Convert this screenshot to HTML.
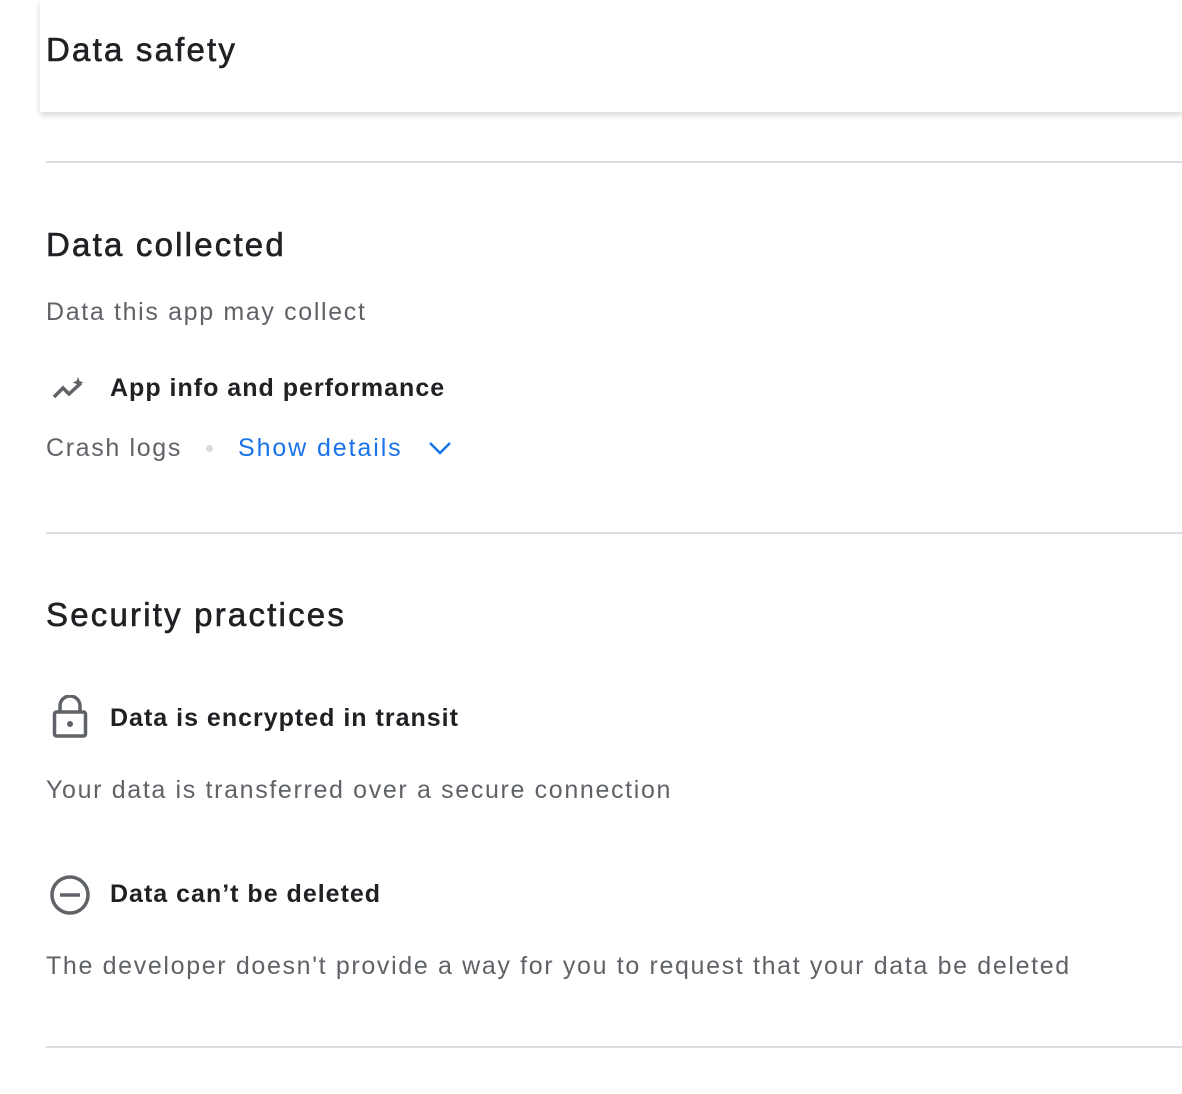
<!DOCTYPE html>
<html><head><meta charset="utf-8"><style>
html,body{margin:0;padding:0;background:#fff;width:1182px;height:1094px;overflow:hidden;font-family:"Liberation Sans",Arial,sans-serif;}
.a{position:absolute;white-space:nowrap;}
.h{font-size:33px;color:#202124;letter-spacing:2.2px;-webkit-text-stroke:0.6px #202124;}
.g{font-size:25px;color:#5f6368;letter-spacing:1.65px;}
.b{font-size:25px;color:#202124;font-weight:bold;letter-spacing:1px;}
.line{position:absolute;left:46px;right:0;height:2px;background:#dadce0;}
</style></head><body>
<div class="a" style="left:40px;top:0;width:1142px;height:112px;background:#fff;box-shadow:0 3px 6px rgba(0,0,0,0.16);"></div>
<div class="a h" style="left:46px;top:31px;">Data safety</div>
<div class="line" style="top:161px;"></div>
<div class="a h" style="left:46px;top:226px;">Data collected</div>
<div class="a g" style="left:46px;top:298px;">Data this app may collect</div>
<svg class="a" style="left:52px;top:375px" width="36" height="28" viewBox="0 0 36 28"><path d="M2 22 L11 13 L17 19 L29 8" fill="none" stroke="#5f6368" stroke-width="3.5"/><path d="M26 2 L27.5 6 L31.5 7.5 L27.5 9 L26 13 L24.5 9 L20.5 7.5 L24.5 6 Z" fill="#5f6368"/></svg>
<div class="a b" style="left:110px;top:374px;">App info and performance</div>
<div class="a g" style="left:46px;top:434px;">Crash logs</div>
<div class="a" style="left:206px;top:445px;width:7px;height:7px;border-radius:50%;background:#dadce0;"></div>
<div class="a" style="left:238px;top:434px;font-size:25px;color:#1a73e8;letter-spacing:1.9px;">Show details</div>
<svg class="a" style="left:428px;top:440px" width="24" height="16" viewBox="0 0 24 16"><path d="M2 3 L12 13 L22 3" fill="none" stroke="#1a73e8" stroke-width="2.5"/></svg>
<div class="line" style="top:532px;"></div>
<div class="a h" style="left:46px;top:596px;">Security practices</div>
<svg class="a" style="left:52px;top:695px" width="36" height="44" viewBox="0 0 36 44"><rect x="2.5" y="17" width="31" height="24" rx="2" fill="none" stroke="#5f6368" stroke-width="3.5"/><path d="M8 17 V11 A10 10 0 0 1 28 11 V17" fill="none" stroke="#5f6368" stroke-width="3.5"/><circle cx="18" cy="29" r="3" fill="#5f6368"/></svg>
<div class="a b" style="left:110px;top:704px;">Data is encrypted in transit</div>
<div class="a g" style="left:46px;top:776px;">Your data is transferred over a secure connection</div>
<svg class="a" style="left:49px;top:874px" width="42" height="42" viewBox="0 0 42 42"><circle cx="21" cy="21" r="18" fill="none" stroke="#5f6368" stroke-width="3.5"/><path d="M11 21 H31" stroke="#5f6368" stroke-width="3.5"/></svg>
<div class="a b" style="left:110px;top:880px;">Data can’t be deleted</div>
<div class="a g" style="left:46px;top:952px;">The developer doesn't provide a way for you to request that your data be deleted</div>
<div class="line" style="top:1046px;"></div>
</body></html>
